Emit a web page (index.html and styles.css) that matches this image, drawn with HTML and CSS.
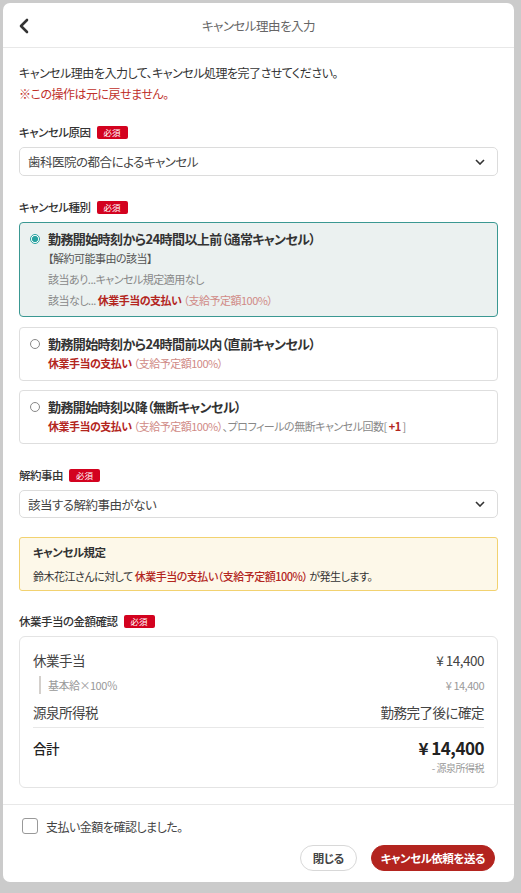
FILE: index.html
```html
<!DOCTYPE html>
<html lang="ja">
  <head>
    <title>キャンセル理由を入力</title>
    <meta charset="UTF-8">
    <meta name="viewport" content="width=device-width, initial-scale=1.0">
    <link rel="stylesheet" href="styles.css">
  </head>
  <body>
    <div class="modal">
      <header class="modal-header">
        <button class="back-btn" type="button" aria-label="戻る">
          <svg width="12" height="16" viewBox="0 0 12 16"><path d="M9 2 L3 8 L9 14" fill="none" stroke="#333" stroke-width="2.6" stroke-linecap="round" stroke-linejoin="round"/></svg>
        </button>
        <h1>キャンセル理由を入力</h1>
      </header>

      <main class="modal-body">
        <p class="intro">キャンセル理由を入力して、キャンセル処理を完了させてください。<br>
          <span class="warn">※この操作は元に戻せません。</span></p>

        <div class="field">
          <div class="field-label">キャンセル原因 <span class="badge">必須</span></div>
          <div class="select">
            <span>歯科医院の都合によるキャンセル</span>
            <svg width="10" height="6" viewBox="0 0 10 6"><path d="M1 1 L5 5 L9 1" fill="none" stroke="#333" stroke-width="1.6"/></svg>
          </div>
        </div>

        <div class="field">
          <div class="field-label">キャンセル種別 <span class="badge">必須</span></div>
          <div class="options">
            <label class="option checked">
              <span class="radio"></span>
              <div class="option-text">
                <div class="option-title">勤務開始時刻から24時間以上前（通常キャンセル）</div>
                <div class="option-line dark">【解約可能事由の該当】</div>
                <div class="option-line">該当あり...キャンセル規定適用なし</div>
                <div class="option-line">該当なし... <span class="pay">休業手当の支払い</span> <span class="rate">（支給予定額100%）</span></div>
              </div>
            </label>
            <label class="option">
              <span class="radio"></span>
              <div class="option-text">
                <div class="option-title">勤務開始時刻から24時間前以内（直前キャンセル）</div>
                <div class="option-line"><span class="pay">休業手当の支払い</span> <span class="rate">（支給予定額100%）</span></div>
              </div>
            </label>
            <label class="option">
              <span class="radio"></span>
              <div class="option-text">
                <div class="option-title">勤務開始時刻以降（無断キャンセル）</div>
                <div class="option-line"><span class="pay">休業手当の支払い</span> <span class="rate">（支給予定額100%）</span>、プロフィールの無断キャンセル回数[ <span class="pay">+1</span> ]</div>
              </div>
            </label>
          </div>
        </div>

        <div class="field tight">
          <div class="field-label">解約事由 <span class="badge">必須</span></div>
          <div class="select">
            <span>該当する解約事由がない</span>
            <svg width="10" height="6" viewBox="0 0 10 6"><path d="M1 1 L5 5 L9 1" fill="none" stroke="#333" stroke-width="1.6"/></svg>
          </div>
        </div>

        <div class="notice">
          <div class="notice-title">キャンセル規定</div>
          <div class="notice-text">鈴木花江さんに対して <span class="pay">休業手当の支払い（支給予定額100%）</span> が発生します。</div>
        </div>

        <div class="field">
          <div class="field-label">休業手当の金額確認 <span class="badge">必須</span></div>
          <div class="amounts">
            <div class="row">
              <span>休業手当</span>
              <span>¥ 14,400</span>
            </div>
            <div class="row sub">
              <span>基本給×100％</span>
              <span>¥ 14,400</span>
            </div>
            <div class="row">
              <span>源泉所得税</span>
              <span>勤務完了後に確定</span>
            </div>
            <div class="row total">
              <span>合計</span>
              <span class="total-num">¥ 14,400</span>
            </div>
            <div class="total-note">- 源泉所得税</div>
          </div>
        </div>
      </main>

      <footer class="modal-footer">
        <label class="confirm">
          <span class="checkbox"></span>
          支払い金額を確認しました。
        </label>
        <div class="actions">
          <button class="btn" type="button">閉じる</button>
          <button class="btn primary" type="button">キャンセル依頼を送る</button>
        </div>
      </footer>
    </div>
  </body>
</html>
```

FILE: styles.css
```css
* {
  box-sizing: border-box;
  margin: 0;
  padding: 0;
}

body {
  font-family: "Noto Sans CJK JP", "Noto Sans", sans-serif;
  font-feature-settings: "palt";
  font-size: 12px;
  letter-spacing: -0.5px;
  color: #333;
  background-color: #cbcbcb;
  padding: 3px 7px 0 3px;
}

.modal {
  width: 511px;
  height: 879px;
  background-color: #fff;
  border-radius: 7px;
  display: flex;
  flex-direction: column;
  overflow: hidden;
}

/* header */
.modal-header {
  height: 45px;
  flex-shrink: 0;
  display: flex;
  align-items: center;
  justify-content: center;
  border-bottom: 1px solid #e8e8e8;
  position: relative;
}

.modal-header h1 {
  font-size: 12.5px;
  font-weight: normal;
  color: #666;
}

.back-btn {
  position: absolute;
  left: 15px;
  top: 14px;
  background: none;
  border: none;
  width: 14px;
  height: 18px;
  display: flex;
  align-items: center;
}

/* body */
.modal-body {
  flex: 1;
  overflow: hidden;
  padding: 14px 16px 0;
}

.intro {
  font-size: 12px;
  line-height: 21px;
  color: #333;
  margin-bottom: 18px;
}

.warn {
  color: #c0302a;
}

.field {
  margin-bottom: 21px;
}

.field.tight {
  margin-bottom: 19px;
}

.field.tight .select {
  height: 28px;
}

.field-label {
  display: flex;
  align-items: center;
  gap: 6px;
  height: 20px;
  font-size: 11.5px;
  font-weight: 500;
  margin-bottom: 5px;
}

.badge {
  background-color: #d3021f;
  color: #fff;
  font-size: 8.5px;
  font-weight: normal;
  letter-spacing: 0;
  line-height: 13px;
  padding: 0 7px;
  border-radius: 2px;
}

.select {
  height: 29px;
  border: 1px solid #dcdcdc;
  border-radius: 5px;
  display: flex;
  align-items: center;
  justify-content: space-between;
  padding: 0 12px 0 8px;
  font-size: 12.5px;
  color: #444;
}

/* radio cards */
.options {
  display: flex;
  flex-direction: column;
  gap: 9px;
}

.option {
  display: flex;
  align-items: flex-start;
  gap: 8px;
  border: 1px solid #dedede;
  border-radius: 4px;
  padding: 7px 12px 6px 10px;
}

.option.checked {
  background-color: #ebf1f0;
  border-color: #3a9892;
  padding-bottom: 5px;
  margin-bottom: 1px;
}

.radio {
  width: 10px;
  height: 10px;
  margin-top: 4px;
  border: 1px solid #888;
  border-radius: 50%;
  flex-shrink: 0;
}

.option.checked .radio {
  border: 1px solid #27a2a0;
  background: radial-gradient(circle, #27a2a0 0 2.8px, #fff 3.3px);
}

.option-title {
  font-size: 13px;
  font-weight: bold;
  line-height: 18px;
  color: #333;
  letter-spacing: -0.6px;
}

.option-line {
  font-size: 11px;
  line-height: 21px;
  color: #888;
}

.option-line.dark {
  color: #555;
}

.pay {
  color: #b3261e;
  font-weight: bold;
}

.rate {
  color: #d08a86;
}

/* notice */
.notice {
  background-color: #fdf8e9;
  border: 1px solid #f2d270;
  border-radius: 3px;
  padding: 4px 13px;
  margin-bottom: 20px;
}

.notice-title {
  font-size: 11.5px;
  font-weight: bold;
  line-height: 20px;
  color: #333;
}

.notice-text {
  font-size: 11px;
  line-height: 20px;
  margin-top: 4px;
  color: #333;
}

.notice-text .pay {
  font-weight: 500;
}

/* amount breakdown */
.amounts {
  border: 1px solid #e4e4e4;
  border-radius: 6px;
  padding: 12px 13px 11px;
}

.row {
  display: flex;
  justify-content: space-between;
  font-size: 13.5px;
  line-height: 22px;
  color: #444;
}

.row.sub {
  font-size: 11px;
  line-height: 18px;
  color: #999;
  margin: 5px 0 7px 6px;
  border-left: 2px solid #d4d0cc;
  padding-left: 7px;
}

.row.total {
  border-top: 1px solid #e8e8e8;
  margin-top: 4px;
  padding-top: 9px;
  color: #222;
  font-weight: 500;
}

.total-num {
  font-size: 17px;
  font-weight: bold;
  line-height: 22px;
}

.total-note {
  text-align: right;
  font-size: 10px;
  color: #999;
  line-height: 16px;
  margin-top: 1px;
}

/* footer */
.modal-footer {
  flex-shrink: 0;
  border-top: 1px solid #e8e8e8;
  padding: 13px 19px 11px;
}

.confirm {
  display: flex;
  align-items: center;
  gap: 8px;
  font-size: 12px;
  color: #444;
  height: 16px;
}

.checkbox {
  width: 16px;
  height: 16px;
  border: 1px solid #999;
  border-radius: 3px;
}

.actions {
  display: flex;
  justify-content: flex-end;
  gap: 14px;
  margin-top: 11px;
}

.btn {
  font-family: inherit;
  font-feature-settings: "palt";
  letter-spacing: -0.5px;
  height: 26px;
  padding: 0 12px;
  border: 1px solid #d8d8d8;
  border-radius: 13px;
  background-color: #fff;
  color: #444;
  font-size: 11.5px;
  font-weight: bold;
}

.btn.primary {
  background-color: #b3241f;
  border-color: #b3241f;
  color: #fff;
  padding: 0 9px;
}
```
